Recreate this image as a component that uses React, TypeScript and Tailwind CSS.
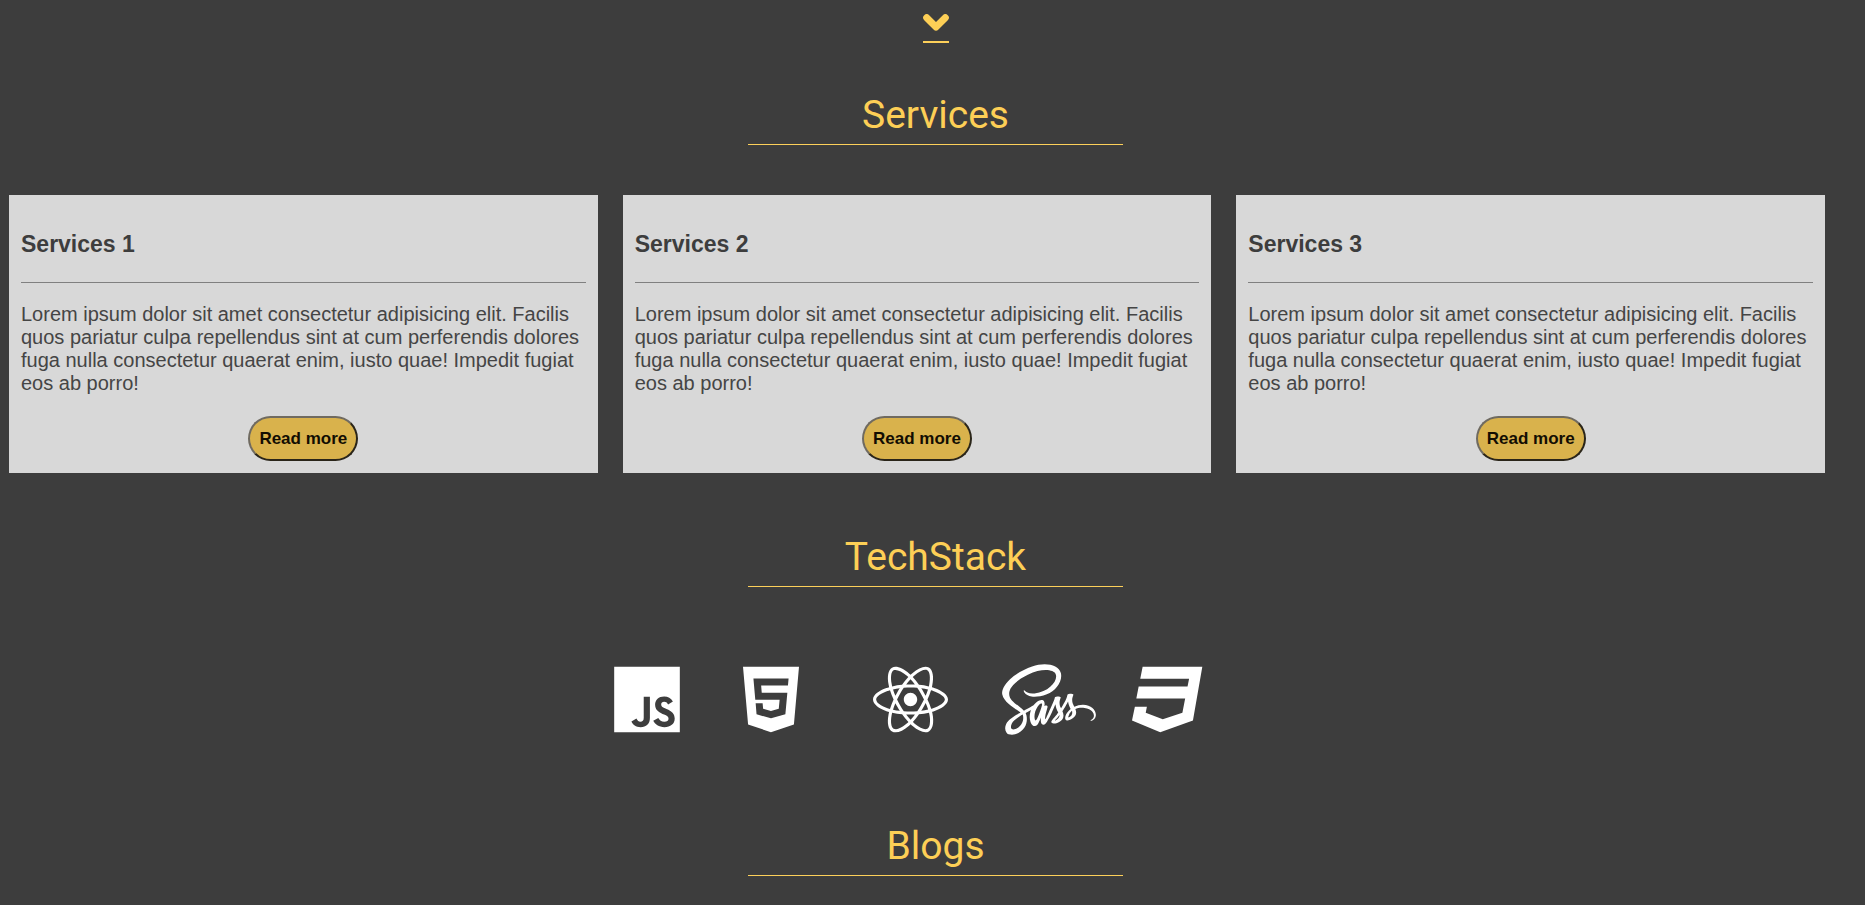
import { FaJs, FaHtml5, FaReact, FaSass, FaCss3 } from 'react-icons/fa';

const services = ['Services 1', 'Services 2', 'Services 3'];

const stack = [
  { name: 'JavaScript', Icon: FaJs, width: 'w-[66px]' },
  { name: 'HTML5', Icon: FaHtml5, width: 'w-[56px]' },
  { name: 'React', Icon: FaReact, width: 'w-[75px]' },
  { name: 'Sass', Icon: FaSass, width: 'w-[94px]' },
  { name: 'CSS3', Icon: FaCss3, width: 'w-[75px]' },
];

function SectionTitle({ children }: { children: string }) {
  return (
    <h2 className="mx-auto w-[375px] border-b border-[#fdd05a] pt-[7px] text-center font-['Roboto',sans-serif] text-[39px] leading-[58px] font-normal text-[#fdcf56]">
      {children}
    </h2>
  );
}

function ServiceCard({ title }: { title: string }) {
  return (
    <article className="flex flex-col bg-[#d8d8d8] p-3 text-[#3d3d3d]">
      <h3 className="mt-6 text-[23px] leading-[27px] font-bold">{title}</h3>
      <hr className="mt-6 border-[#808080]" />
      <p className="mt-5 text-[20px] leading-[23px] text-[#454545]">
        Lorem ipsum dolor sit amet consectetur adipisicing elit. Facilis quos pariatur culpa
        repellendus sint at cum perferendis dolores fuga nulla consectetur quaerat enim, iusto
        quae! Impedit fugiat eos ab porro!
      </p>
      <button
        type="button"
        className="mx-auto mt-[21px] h-[45px] rounded-full border-2 border-t-[#6f6a60] border-r-[#2a2519] border-b-[#2a2519] border-l-[#6f6a60] bg-[#d9b24c] px-[9px] text-[17px] font-bold text-[#120d02]"
      >
        Read more
      </button>
    </article>
  );
}

export default function App() {
  return (
    <main className="min-h-screen bg-[#3d3d3d] pb-7 font-['Liberation_Sans',Arial,sans-serif]">
      <div className="pt-[14px] pl-[6px]">
        <a
          href="#services"
          aria-label="Scroll to services"
          className="mx-auto block w-[26px] border-b-2 border-[#fdd05a] pb-[10px] text-[#fdcf56]"
        >
          <svg viewBox="0 0 26 17" className="h-[17px] w-[26px]" fill="none" aria-hidden="true">
            <path
              d="M3.7 3.7L13 13L22.3 3.7"
              stroke="currentColor"
              strokeWidth="7"
              strokeLinecap="round"
              strokeLinejoin="round"
            />
          </svg>
        </a>
      </div>

      <section id="services" className="pt-9">
        <div className="pl-[6px]">
          <SectionTitle>Services</SectionTitle>
        </div>
        <div className="mt-[50px] mr-10 ml-[9px] grid grid-cols-3 gap-[25px]">
          {services.map((title) => (
            <ServiceCard key={title} title={title} />
          ))}
        </div>
      </section>

      <section className="pt-12">
        <div className="pl-[6px]">
          <SectionTitle>TechStack</SectionTitle>
        </div>
        <div className="pt-[75px] pl-[10px]">
          <ul className="mx-auto grid w-[648px] grid-cols-5">
            {stack.map(({ name, Icon, width }) => (
              <li key={name}>
                <Icon title={name} className={`h-[75px] text-white ${width}`} />
              </li>
            ))}
          </ul>
        </div>
      </section>

      <section className="pt-[73px] pl-[6px]">
        <SectionTitle>Blogs</SectionTitle>
      </section>
    </main>
  );
}
